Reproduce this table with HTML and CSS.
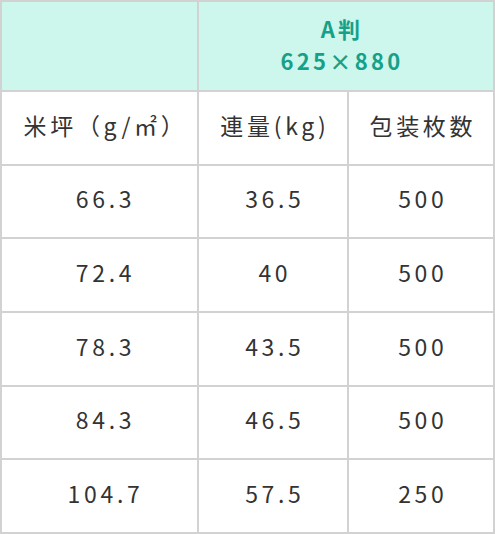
FILE: index.html
```html
<!DOCTYPE html>
<html lang="ja">
<head>
<meta charset="utf-8">
<link rel="stylesheet" href="styles.css">
</head>
<body>
<div class="table">
  <div class="cell head"></div>
  <div class="cell head span2"><span>A判</span><span>625×880</span></div>
  <div class="cell first label">米坪（g/㎡）</div>
  <div class="cell label">連量(kg)</div>
  <div class="cell label">包装枚数</div>
  <div class="cell first">66.3</div>
  <div class="cell">36.5</div>
  <div class="cell">500</div>
  <div class="cell first">72.4</div>
  <div class="cell">40</div>
  <div class="cell">500</div>
  <div class="cell first">78.3</div>
  <div class="cell">43.5</div>
  <div class="cell">500</div>
  <div class="cell first">84.3</div>
  <div class="cell">46.5</div>
  <div class="cell">500</div>
  <div class="cell first">104.7</div>
  <div class="cell">57.5</div>
  <div class="cell">250</div>
</div>
</body>
</html>
```
FILE: styles.css
```css
html, body {
  margin: 0;
  padding: 0;
  background: #fff;
}
.table {
  width: 495px;
  height: 534px;
  box-sizing: border-box;
  display: grid;
  grid-template-columns: 195px 148px 1fr;
  grid-template-rows: 88px repeat(6, 1fr);
  gap: 2px;
  padding: 2px;
  background: #d2d2d2;
  font-family: "Noto Sans CJK JP", "Noto Sans", sans-serif;
  color: #333;
  font-size: 23px;
  letter-spacing: 0.16em;
}
.cell {
  background: #fff;
  display: flex;
  align-items: center;
  justify-content: center;
  padding-left: 0.16em;
  padding-bottom: 6px;
}
.cell.label {
  letter-spacing: 0.16em;
}
.cell.first {
  padding-left: 12px;
}
.cell.head {
  background: #cdf7ec;
}
.cell.span2 {
  grid-column: span 2;
  flex-direction: column;
  color: #17a089;
  font-size: 22px;
  font-weight: bold;
  line-height: 32px;
  letter-spacing: 0.15em;
  padding: 0 8px 4px 0;
}
```
